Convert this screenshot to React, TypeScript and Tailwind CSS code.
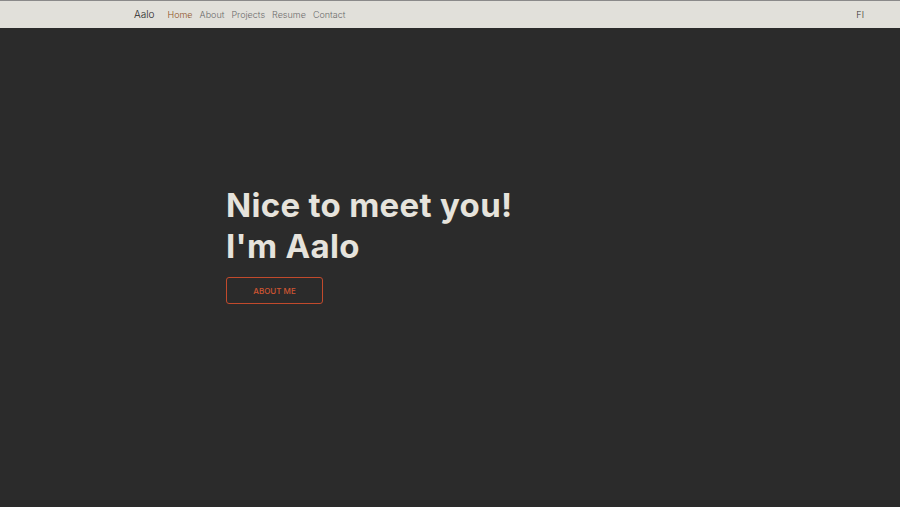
export default function App() {
  const links = ["Home", "About", "Projects", "Resume", "Contact"];
  return (
    <div className="min-h-[507px] bg-[#2b2b2b] font-['Inter',sans-serif]">
      {/* Navbar */}
      <nav className="h-[28px] bg-[#e1e0da] border-t border-[#8a8a8a]">
        <div className="flex items-center h-full pl-[134px] pr-[36px]">
          <span className="text-[10px] font-light text-[#1f1f1f] mr-[13px]">Aalo</span>
          <ul className="flex gap-[7px] text-[9px] font-light">
            {links.map((l) => (
              <li key={l} className={l === "Home" ? "text-[#8f5326]" : "text-[#6b6b6b]"}>
                {l}
              </li>
            ))}
          </ul>
          <span className="ml-auto text-[9px] font-light text-[#333]">FI</span>
        </div>
      </nav>

      {/* Hero */}
      <section className="pl-[226px] pt-[157px]">
        <h1 className="text-[33px] leading-[41px] font-bold text-[#e6e3dc] tracking-[0.3px]">
          Nice to meet you!
          <br />
          I'm Aalo
        </h1>
        <button className="mt-[10px] w-[97px] h-[27px] border border-[#c24a2c] rounded-[3px] text-[8px] text-[#cf5532] font-medium">
          ABOUT ME
        </button>
      </section>
    </div>
  );
}
